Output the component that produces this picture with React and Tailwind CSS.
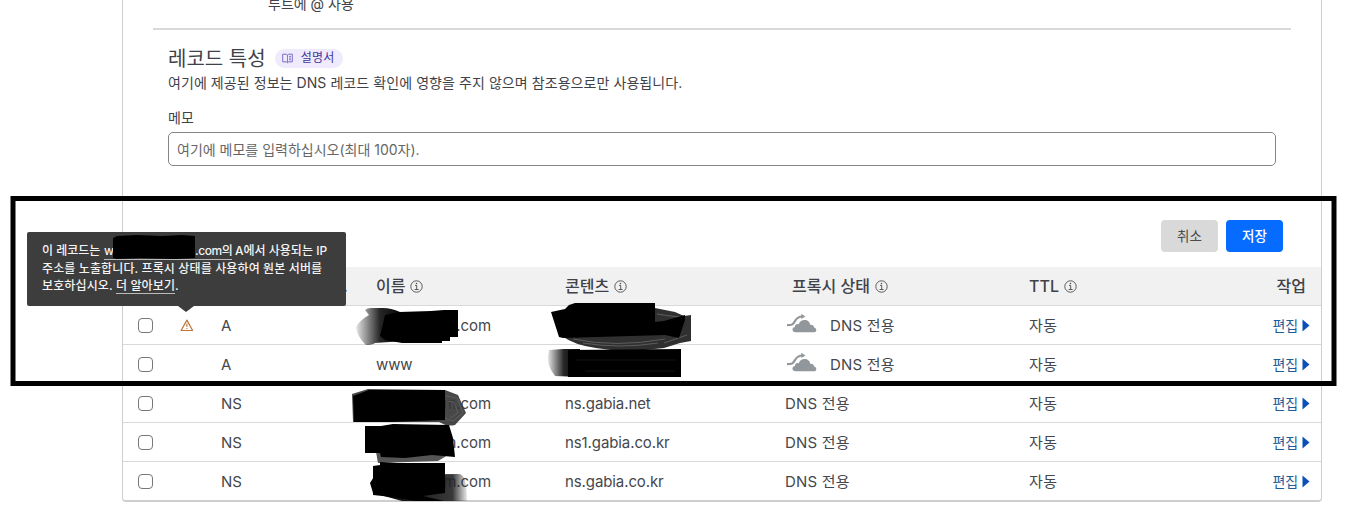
import React from "react";

const records = [
  { type: "A", name: "y.com", content: "", proxy: true, warning: true },
  { type: "A", name: "www", content: "", proxy: true, full: true },
  { type: "NS", name: "m.com", content: "ns.gabia.net" },
  { type: "NS", name: "n.com", content: "ns1.gabia.co.kr" },
  { type: "NS", name: "m.com", content: "ns.gabia.co.kr" },
];

const columns =
  "grid grid-cols-[43px_40px_155px_189px_220px_244px_80px_1fr] items-center pl-[15px] pr-3";

function InfoIcon() {
  return (
    <svg width="13" height="13" viewBox="0 0 13 13" fill="none" stroke="#4b4b4b">
      <circle cx="6.5" cy="6.5" r="5.7" strokeWidth="0.9" />
      <path d="M5 5.4h1.7v4M4.6 9.5h4" strokeWidth="0.9" />
      <circle cx="6.5" cy="3.4" r="0.75" fill="#4b4b4b" stroke="none" />
    </svg>
  );
}

function BookIcon() {
  return (
    <svg width="11" height="11" viewBox="0 0 11 11" fill="none" stroke="#7b6ac9">
      <path d="M.7 1.2h3.6l1.2.8 1.2-.8h3.6v7.6H6.7l-1.2.9-1.2-.9H.7z" />
      <path d="M5.5 2v7.5M7 3.4h2M7 5.1h2M7 6.8h2" strokeWidth="0.9" />
    </svg>
  );
}

function WarningIcon() {
  return (
    <svg width="14" height="13" viewBox="0 0 14 13" fill="none" stroke="#bd7438">
      <path d="M6.9 1.1L12.6 11.5H1.1z" strokeLinejoin="round" strokeWidth="1.2" />
      <path d="M6.9 4.5v3.5M6.9 8.9v1.2" strokeWidth="1.1" />
    </svg>
  );
}

function CloudIcon() {
  return (
    <svg width="30" height="20" viewBox="0 0 30 20">
      <path
        d="M0 12.2c5.6 0 6-.8 8.2-4.5 1.7-2.9 3.3-4.2 7.3-4.2"
        fill="none"
        stroke="#92979b"
        strokeWidth="2.2"
      />
      <path d="M14.3.7l4.1 2.7-4.1 2.7z" fill="#92979b" />
      <path
        d="M8.6 19.3c-3.8 0-4.3-4.9-.6-5.4-.2-2.5 2-3.5 3.7-2.6C12.8 8.3 15 7 17.4 7c3.3 0 5.5 2.1 5.9 4.9 2.2-.3 3.5.8 3.7 2.5 3.2.5 3 4.9-.3 4.9z"
        fill="#92979b"
      />
    </svg>
  );
}

function HeaderCell({ label, className = "" }) {
  return (
    <div className={`flex items-center gap-[5px] ${className}`}>
      <span>{label}</span>
      <InfoIcon />
    </div>
  );
}

function RecordRow({ record }) {
  return (
    <div
      className={`${columns} h-[39px] border-t border-[#d9d9d9] text-[15px] tracking-[-0.1px] text-[#45474c]`}
    >
      <input
        type="checkbox"
        className="mt-px h-[15px] w-[15px] appearance-none rounded-[4px] border border-[#777] bg-white"
      />
      <div className="-ml-px">{record.warning && <WarningIcon />}</div>
      <div className="pt-[2px]">{record.type}</div>
      <div className={record.full ? "pt-[2px]" : "w-[115px] pt-[2px] text-right"}>
        {record.name}
      </div>
      <div className="pt-[2px]">{record.content}</div>
      <div className="flex items-center">
        {record.proxy && (
          <span className="mr-[13px] -mt-1 ml-[2px]">
            <CloudIcon />
          </span>
        )}
        <span className="pt-[2px] tracking-[0.2px]">DNS 전용</span>
      </div>
      <div className="pt-[2px] tracking-[0.4px]">자동</div>
      <div className="-mr-px flex items-center justify-end gap-[4px] text-[14px] text-[#1f5d99]">
        <button type="button">편집</button>
        <svg width="8" height="13" viewBox="0 0 8 13">
          <path d="M.5.5L7.5 6.5L.5 12.5z" fill="#0b50b8" />
        </svg>
      </div>
    </div>
  );
}

function Tooltip() {
  return (
    <div className="absolute left-[27px] top-[232px] h-[74px] w-[319px] rounded-[2px] bg-[#3d3d3d] pl-[15px] pt-[10px] text-[12px] leading-[17px] font-medium tracking-[0.12px] whitespace-nowrap text-[#f4f4f4]">
      <p className="flex">
        <span className="w-[62px] tracking-normal">이 레코드는</span>
        <span className="w-[91px] border-b border-[#bbb]">w</span>
        <span className="w-[37px] border-b border-[#bbb] tracking-[-0.4px]">
          .com의
        </span>
        <span className="ml-[3px] tracking-normal">A에서 사용되는 IP</span>
      </p>
      <p>주소를 노출합니다. 프록시 상태를 사용하여 원본 서버를</p>
      <p>
        보호하십시오. <span className="border-b border-[#bbb]">더 알아보기</span>.
      </p>
      <svg
        className="absolute left-[151px] top-[74px]"
        width="16"
        height="6"
        viewBox="0 0 16 6"
      >
        <path d="M0 0h16L8 6z" fill="#3d3d3d" />
      </svg>
    </div>
  );
}

// Marker strokes that hide the private values, plus the highlight frame
function Markers() {
  return (
    <svg
      className="pointer-events-none absolute left-0 top-0"
      width="1346"
      height="515"
      viewBox="0 0 1346 515"
    >
      <defs>
        <linearGradient id="fadeLeft">
          <stop offset="0" stopColor="#000" stopOpacity="0.1" />
          <stop offset="0.5" stopColor="#000" stopOpacity="0.85" />
          <stop offset="1" stopColor="#000" />
        </linearGradient>
        <linearGradient id="fadeRight">
          <stop offset="0" stopColor="#000" />
          <stop offset="0.85" stopColor="#222" stopOpacity="0.9" />
          <stop offset="1" stopColor="#222" stopOpacity="0.1" />
        </linearGradient>
      </defs>

      <path d="M113 238l4-2 20-1 25 1 20-1 13 1v22l-20 1-35-1-24 1-3-1z" />

      <path
        d="M356 327q4-7 13-12l-4-5q2-2 6-2h12q8 0 17 4l4 5v24l-29 2q-3 2-9 2l-3-3q-6-7-7-15z"
        fill="url(#fadeLeft)"
      />
      <path d="M385 315l14-3 32-1 13-1h14v27h-8v4h-8v2h-40l-17-3-5-4z" />

      <path
        d="M562 336l93-28 20 4 9 4 7-1v26l-11 2-16 5q-39 5-68 0-22-3-34-12z"
        fill="#303030"
      />
      <path
        d="M573 339q42 9 92 0M583 343q37 6 75 0M657 314q18 3 28 3M664 343l23-8"
        fill="none"
        stroke="#686868"
        strokeWidth="0.8"
      />
      <path d="M551 312l14-3 4-4 6-2h80v19l9-1 21-6v5l-6 18-14-3-102 3-4-1z" />
      <path
        d="M549 350l14-1h17v28l-25-1q-10-12-6-26z"
        fill="url(#fadeLeft)"
      />
      <path d="M568 350l113-1v28H568z" />
      <path d="M577 360h98M585 371h90" stroke="#151515" />

      <path
        d="M352 394l16-5 77 1 13 5 8 18-11 12q-8 2-16-3h-86z"
        fill="#343434"
        fillOpacity="0.9"
      />
      <path
        d="M446 396l11 2 6 15-10 8-12-4M446 401l8 1 4 11-8 5"
        fill="none"
        stroke="#666"
        strokeWidth="0.7"
      />
      <path d="M353 396l16-6h76v30l-54 2h-37z" />

      <path d="M376 452l69-3 3 6-10 6-60 2z" fill="#555" />
      <path d="M365 426h16l12-2 56 1 4 13 2 19-23-2-27 3-24-1-1-4h-15z" />

      <path
        d="M370 483l5-8 84-1q8 0 8 27h-65l-29-8z"
        fill="url(#fadeRight)"
      />
      <path d="M373 466l7-1v-3l17 1h48v30l-22 3 21 5h-28l-24-4-19-2z" />

      <rect
        x="13"
        y="198.5"
        width="1321"
        height="185"
        fill="none"
        stroke="#000"
        strokeWidth="5"
      />
    </svg>
  );
}

function App() {
  return (
    <div className="relative h-[515px] w-[1346px] overflow-hidden bg-white font-[Inter,'Noto_Sans_CJK_KR',sans-serif] text-[#3f4248]">
      <div className="ml-[122px] h-[502px] w-[1200px] overflow-hidden rounded-b-[4px] border-x border-b-2 border-[#cecece]">
        <div className="mx-[30px] flex h-[30px] items-start border-b-2 border-[#d9d9d9] pl-[115px] text-[14px] leading-[20px]">
          <p className="-mt-[6px]">루트에 @ 사용</p>
        </div>

        <div className="px-[45px]">
          <div className="mt-[15px] flex h-[26px] items-center gap-[9px]">
            <h2 className="pt-[2px] text-[20px]">레코드 특성</h2>
            <span className="flex h-[19px] w-[68px] items-center gap-[8px] rounded-full bg-[#efebfc] pl-[7px] text-[12px] tracking-[0.3px] text-[#42369a]">
              <BookIcon />
              설명서
            </span>
          </div>
          <p className="mt-[2px] text-[14px] leading-[20px] tracking-[0.07px]">
            여기에 제공된 정보는 DNS 레코드 확인에 영향을 주지 않으며 참조용으로만
            사용됩니다.
          </p>
          <label className="mt-[15px] block text-[14px] leading-[20px]">
            메모
          </label>
          <input
            type="text"
            placeholder="여기에 메모를 입력하십시오(최대 100자)."
            className="mt-[4px] block h-[34px] w-[1108px] rounded-[5px] border border-[#858585] px-2 text-[14px] placeholder:text-[#666]"
          />
        </div>

        <div className="mt-[54px] mr-[38px] flex justify-end gap-2 text-[13.5px]">
          <button
            type="button"
            className="h-[32px] w-[57px] rounded-[4px] bg-[#d9d9d9] text-[#4a4a4a]"
          >
            취소
          </button>
          <button
            type="button"
            className="h-[32px] w-[57px] rounded-[4px] bg-[#056cff] font-medium text-white"
          >
            저장
          </button>
        </div>

        <div className="mt-[15px]">
          <div
            className={`${columns} h-[38px] bg-[#f1f1f1] text-[16px] font-medium`}
          >
            <div />
            <div />
            <div className="pl-[122px]">.</div>
            <HeaderCell label="이름" />
            <HeaderCell label="콘텐츠" />
            <HeaderCell label="프록시 상태" className="pl-[7px]" />
            <HeaderCell label="TTL" />
            <div className="pr-[3px] text-right">작업</div>
          </div>
          {records.map((record, i) => (
            <RecordRow key={i} record={record} />
          ))}
        </div>
      </div>

      <Tooltip />
      <Markers />
    </div>
  );
}

export default App;
